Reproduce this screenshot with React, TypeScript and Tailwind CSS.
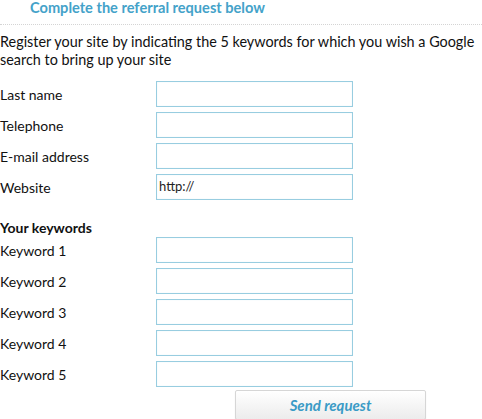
import React from "react";

const Row = ({ label, value }: { label: string; value?: string }) => (
  <div className="flex items-center h-[26px]">
    <div className="w-[156px] text-[14px] text-[#111]">{label}</div>
    <div className="w-[197px] h-[26px] border border-[#98cde0] shadow-[inset_0_0_1px_#c5e4ef] bg-white flex items-center px-[2px] text-[13px] text-[#222]">
      {value}
    </div>
  </div>
);

export default function App() {
  return (
    <div className="w-[482px] h-[419px] overflow-hidden bg-white" style={{ fontFamily: "Lato, 'Open Sans', sans-serif" }}>
      <div className="h-[25px] border-b border-dotted border-[#d4d4d4] pl-[30px]">
        <div className="text-[14.6px] font-bold text-[#44a2c9] leading-[16px]">Complete the referral request below</div>
      </div>
      <p className="mt-[8px] text-[14.4px] leading-[18px] text-[#111]">
        Register your site by indicating the 5 keywords for which you wish a Google search to bring up your site
      </p>
      <div className="mt-[12px] flex flex-col gap-[5px]">
        <Row label="Last name" />
        <Row label="Telephone" />
        <Row label="E-mail address" />
        <Row label="Website" value="http://" />
      </div>
      <div className="mt-[19px] text-[14px] font-bold leading-[18px] text-[#111]">Your keywords</div>
      <div className="flex flex-col gap-[5px]">
        <Row label="Keyword 1" />
        <Row label="Keyword 2" />
        <Row label="Keyword 3" />
        <Row label="Keyword 4" />
        <Row label="Keyword 5" />
      </div>
      <div className="mt-[3px] pl-[235px]">
        <button className="w-[191px] h-[30px] border border-[#d6d6d6] rounded-[2px] bg-gradient-to-b from-white to-[#ececec] shadow-[0_1px_1px_rgba(0,0,0,0.12)] text-[15px] font-bold italic text-[#3a9bc6] leading-[28px]">
          Send request
        </button>
      </div>
    </div>
  );
}
